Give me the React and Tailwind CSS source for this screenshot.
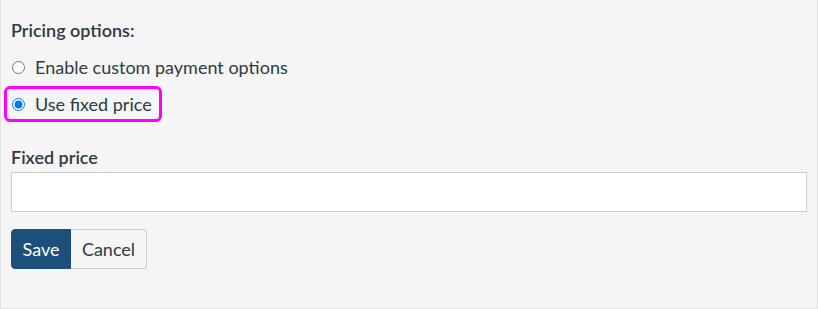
import React, { useState } from 'react'

const App = () => {
    const [option, setOption] = useState("fixed");

    return (
        <div className="w-[818px] h-[309px] bg-white" style={{ fontFamily: 'Lato, "Noto Sans", sans-serif' }}>
            <div className="h-[309px] bg-[#f5f5f5] border-l border-r border-b border-[#e3e3e3] px-[10px] pt-[18px] text-[#2d3b45]">
                <h3 className="text-[18px] leading-[24px] font-semibold">Pricing options:</h3>

                <div className="mt-[13px] flex flex-col">
                    <label className="flex items-center h-[24px] text-[18px]">
                        <input
                            type="radio"
                            name="pricing"
                            checked={option === "custom"}
                            onChange={() => setOption("custom")}
                            className="w-[13px] h-[13px] ml-[1px] mr-[10px] accent-[#0b75e9]"
                        />
                        Enable custom payment options
                    </label>
                    <div className="mt-[7px] -ml-[7px] w-[158px] h-[36px] border-[3px] border-[#ff00ff] rounded-[6px] flex items-center pl-[5px]">
                        <label className="flex items-center text-[18px]">
                            <input
                                type="radio"
                                name="pricing"
                                checked={option === "fixed"}
                                onChange={() => setOption("fixed")}
                                className="w-[13px] h-[13px] mr-[10px] accent-[#0b75e9]"
                            />
                            Use fixed price
                        </label>
                    </div>
                </div>

                <label className="block mt-[23px] text-[18px] leading-[24px] font-semibold">Fixed price</label>
                <input
                    type="text"
                    className="block mt-[3px] w-[796px] h-[40px] bg-white border border-[#c7cdd1] outline-none px-2"
                />

                <div className="mt-[17px] flex">
                    <button className="h-[40px] w-[60px] bg-[#1d4f7c] text-white text-[18px] rounded-l-[4px] border border-[#1d4f7c]">
                        Save
                    </button>
                    <button className="h-[40px] w-[76px] bg-[#f5f5f5] text-[#2d3b45] text-[18px] rounded-r-[4px] border border-l-0 border-[#c7cdd1]">
                        Cancel
                    </button>
                </div>
            </div>
        </div>
    );
};

export default App;
